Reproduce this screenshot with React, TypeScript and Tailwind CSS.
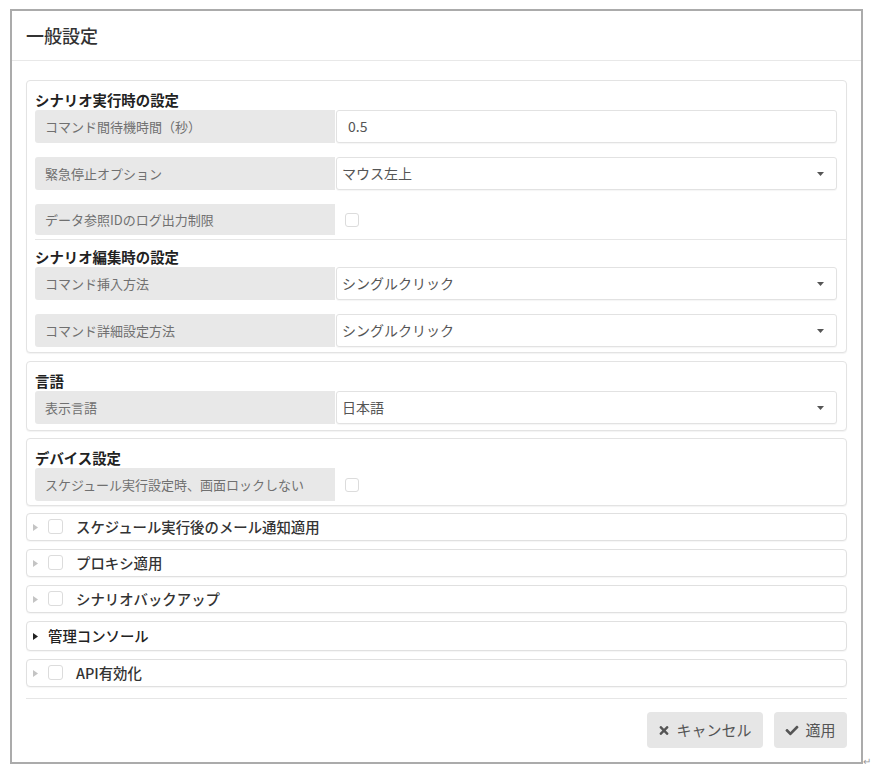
import { FaTimes, FaCheck } from "react-icons/fa"

const FONT = "font-['Noto_Sans_CJK_JP',_'Noto_Sans',_sans-serif]"

function Caret() {
  return (
    <svg width="7" height="4" viewBox="0 0 7 4" className="mr-[12px] shrink-0">
      <path d="M0 0 L7 0 L3.5 4 Z" fill="#555" />
    </svg>
  )
}

function Arrow({ dark }: { dark?: boolean }) {
  return (
    <svg width="5" height="7" viewBox="0 0 5 7" className="shrink-0">
      <path d="M0 0 L5 3.5 L0 7 Z" fill={dark ? "#222" : "#c4c4c4"} />
    </svg>
  )
}

function Box({ size = 14 }: { size?: number }) {
  return (
    <span
      className={`inline-block shrink-0 rounded-[3px] border border-[#dcdcdc] bg-white ${size === 15 ? "h-[15px] w-[15px]" : "h-[14px] w-[14px]"}`}
    />
  )
}

function Label({ text }: { text: string }) {
  return (
    <div className="flex w-[300px] shrink-0 items-center rounded-l-[3px] bg-[#e8e8e8] pl-[10px] text-[13px] text-[#707070]">
      {text}
    </div>
  )
}

function SelectRow({ label, value }: { label: string; value: string }) {
  return (
    <div className="flex h-[33px] gap-[1px]">
      <Label text={label} />
      <div className="flex flex-1 items-center justify-between rounded-[3px] border border-[#e2e2e2] bg-white pl-[5px] text-[14px] text-[#555] shadow-[0_1px_1px_rgba(0,0,0,0.04)]">
        <span>{value}</span>
        <Caret />
      </div>
    </div>
  )
}

function CheckRow({ label, h = "h-[33px]" }: { label: string; h?: string }) {
  return (
    <div className={`flex ${h} gap-[1px]`}>
      <Label text={label} />
      <div className="flex flex-1 items-center pl-[9px]">
        <Box />
      </div>
    </div>
  )
}

function Title({ text }: { text: string }) {
  return <div className="flex h-[20px] items-center text-[14.4px] font-bold text-[#222]">{text}</div>
}

function Card({ children, className = "" }: { children: React.ReactNode; className?: string }) {
  return (
    <div
      className={`rounded-[4px] border border-[#e3e3e3] bg-white pl-[8px] pr-[9px] shadow-[0_1px_1px_rgba(0,0,0,0.05)] ${className}`}
    >
      {children}
    </div>
  )
}

function Item({ text, dark, checkbox = true, h = "h-[28px]" }: { text: string; dark?: boolean; checkbox?: boolean; h?: string }) {
  return (
    <div className={`flex ${h} items-center rounded-[4px] border border-[#e0e0e0] bg-white pl-[6px] shadow-[0_1px_1px_rgba(0,0,0,0.04)]`}>
      <Arrow dark={dark} />
      {checkbox ? (
        <>
          <span className="ml-[10px]">
            <Box size={15} />
          </span>
          <span className="ml-[13px] text-[14.4px] font-medium text-[#333]">{text}</span>
        </>
      ) : (
        <span className="ml-[10px] text-[14.4px] font-medium text-[#222]">{text}</span>
      )}
    </div>
  )
}

export default function App() {
  return (
    <div className={`flex items-end bg-white pl-[10px] pt-[9px] ${FONT}`}>
      <div className="flex w-[853px] shrink-0 flex-col border-2 border-[#ababab] bg-white">
        {/* header */}
        <div className="flex h-[50px] items-center border-b border-[#e8e8e8] pl-[14px] text-[18px] font-medium text-[#333]">
          一般設定
        </div>

        {/* body */}
        <div className="flex flex-col pl-[14px] pr-[14px] pt-[19px]">
          <Card className="pt-[9px] pb-[5px]">
            <Title text="シナリオ実行時の設定" />
            <div className="flex flex-col gap-[14px]">
              <div className="flex h-[33px] gap-[1px]">
                <Label text="コマンド間待機時間（秒）" />
                <div className="flex flex-1 items-center rounded-[3px] border border-[#e2e2e2] bg-white pl-[11px] text-[14px] text-[#555] shadow-[0_1px_1px_rgba(0,0,0,0.04)]">
                  0.5
                </div>
              </div>
              <SelectRow label="緊急停止オプション" value="マウス左上" />
              <CheckRow label="データ参照IDのログ出力制限" h="h-[31px]" />
            </div>
            <div className="-mr-[9px] mt-[4px] border-t border-[#e6e6e6]" />
            <div className="mt-[7px]">
              <Title text="シナリオ編集時の設定" />
            </div>
            <div className="flex flex-col gap-[14px]">
              <SelectRow label="コマンド挿入方法" value="シングルクリック" />
              <SelectRow label="コマンド詳細設定方法" value="シングルクリック" />
            </div>
          </Card>

          <Card className="mt-[8px] pt-[9px] pb-[6px]">
            <Title text="言語" />
            <SelectRow label="表示言語" value="日本語" />
          </Card>

          <Card className="mt-[7px] pt-[9px] pb-[4px]">
            <Title text="デバイス設定" />
            <CheckRow label="スケジュール実行設定時、画面ロックしない" />
          </Card>

          <div className="mt-[7px] flex flex-col gap-[8px]">
            <Item text="スケジュール実行後のメール通知適用" />
            <Item text="プロキシ適用" />
            <Item text="シナリオバックアップ" />
            <Item text="管理コンソール" dark checkbox={false} h="h-[30px]" />
            <Item text="API有効化" />
          </div>

          {/* footer */}
          <div className="mt-[11px] flex justify-end gap-[11px] border-t border-[#e6e6e6] pt-[13px] pb-[14px]">
            <button className="flex h-[36px] w-[116px] items-center justify-center gap-[6px] rounded-[4px] bg-[#e6e6e6] text-[15px] text-[#555]">
              <FaTimes className="h-[13px] w-[12px] text-[#555]" />
              キャンセル
            </button>
            <button className="flex h-[36px] w-[73px] items-center justify-center gap-[6px] rounded-[4px] bg-[#e6e6e6] text-[15px] text-[#555]">
              <FaCheck className="h-[13px] w-[14px] text-[#555]" />
              適用
            </button>
          </div>
        </div>
      </div>
      <span className="mb-[-2px] shrink-0 text-[10px] leading-none text-[#999]">↵</span>
    </div>
  )
}
